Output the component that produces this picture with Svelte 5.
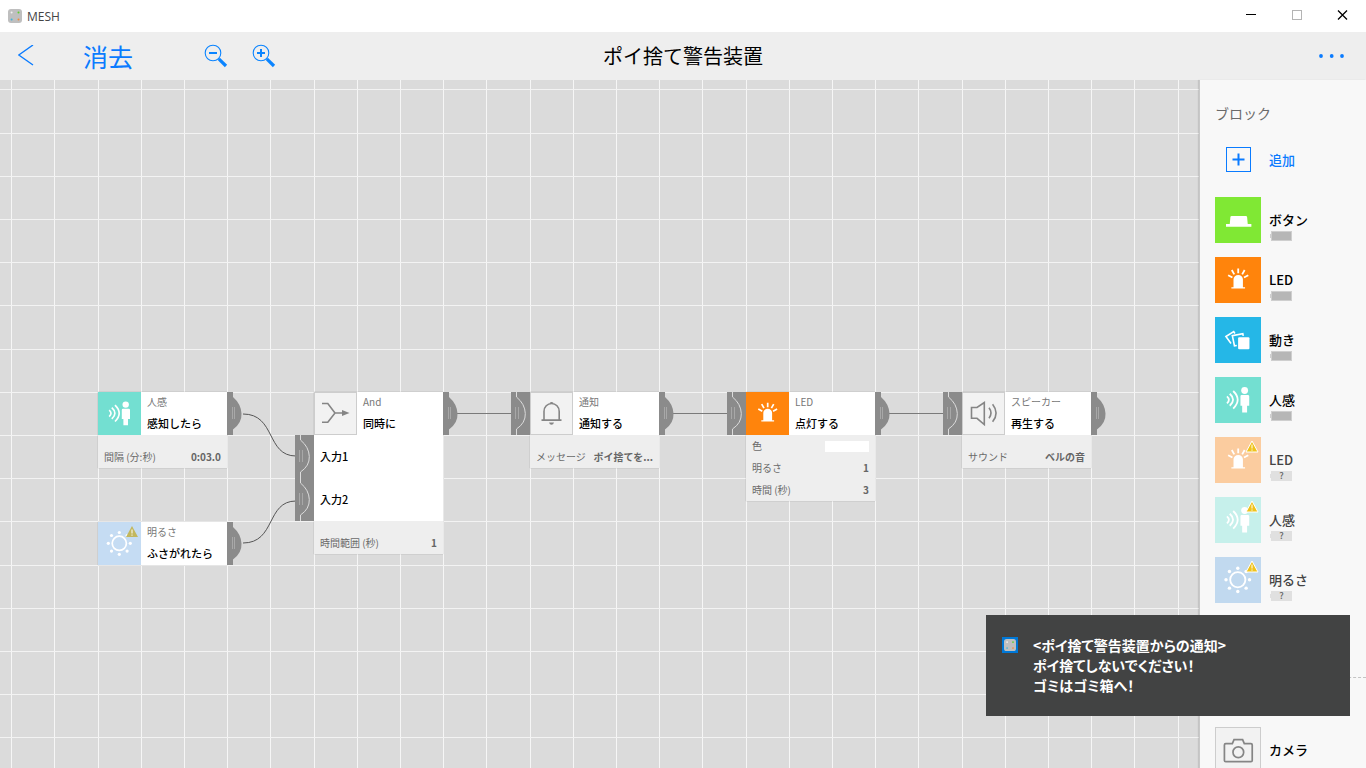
<script>
  const blocks = [
    { icon: 'button', name: 'ボタン', color: '#80e834' },
    { icon: 'led', name: 'LED', color: '#ff840c' },
    { icon: 'motion', name: '動き', color: '#25b7e7' },
    { icon: 'person', name: '人感', color: '#73dfd1' },
    { icon: 'led', name: 'LED', color: '#fbcc9f', lost: true },
    { icon: 'person', name: '人感', color: '#c6f0eb', lost: true },
    { icon: 'sun', name: '明るさ', color: '#c1d9ef', lost: true }
  ]

  const nodes = [
    {
      x: 98, y: 312, icon: 'person', color: '#73dfd1', name: '人感', action: '感知したら',
      params: [{ label: '間隔 (分:秒)', value: '0:03.0' }]
    },
    { x: 98, y: 442, icon: 'sun', color: '#c5dcf3', name: '明るさ', action: 'ふさがれたら', lost: true },
    {
      x: 314, y: 312, icon: 'merge', name: 'And', action: '同時に', inputs: ['入力1', '入力2'],
      params: [{ label: '時間範囲 (秒)', value: '1' }]
    },
    {
      x: 530, y: 312, icon: 'bell', name: '通知', action: '通知する', hasInput: true,
      params: [{ label: 'メッセージ', value: 'ポイ捨てを...' }]
    },
    {
      x: 746, y: 312, icon: 'led', color: '#ff840c', name: 'LED', action: '点灯する', hasInput: true,
      params: [
        { label: '色', swatch: '#ffffff' },
        { label: '明るさ', value: '1' },
        { label: '時間 (秒)', value: '3' }
      ]
    },
    {
      x: 962, y: 312, icon: 'speaker', name: 'スピーカー', action: '再生する', hasInput: true,
      params: [{ label: 'サウンド', value: 'ベルの音' }]
    }
  ]

  const curves = [
    'M243 334C276 334 266 376 296 376',
    'M243 463C276 463 266 421 296 421'
  ]
  const lines = [
    'M457 333.5H512',
    'M673 333.5H728',
    'M889 333.5H944'
  ]

  // grid pitch is 43.2, so five cells make one 216 tile
  const gridX = [0, 43, 87, 130, 173]
  const gridY = [0, 44, 87, 130, 173]
</script>

{#snippet icon(name)}
  <svg class="icon" viewBox="0 0 43 43" fill="none" aria-hidden="true">
    {#if name === 'button'}
      <path fill="#fff" d="M10.3 25.2h3.5l.6-6.4q.1-1.1 1.2-1.1h13.2q1.1 0 1.2 1.1l.6 6.4H34v2.6H10.3z" />
    {:else if name === 'led'}
      <path fill="#fff" d="M17.3 28.2v-7.4a4.4 4 0 0 1 8.8 0v7.4h2v1.2H15.3v-1.2z" />
      <path stroke="#fff" stroke-width="1.7" d="M21.7 10.7v4.6M15.7 12.2l2.3 4M27.7 12.2l-2.3 4M12.3 17l4 2.2M31.1 17l-4 2.2" />
    {:else if name === 'motion'}
      <rect fill="#fff" x="21.6" y="18.9" width="10.6" height="11.2" rx="1" />
      <path stroke="#fff" stroke-width="1.5" d="M26.4 17.6l-.4-2-9.8 1.8 2 9.6 2.2-.3M18.6 15.4l-1.1-1.7-7.3 4.6 4.8 6.5" />
    {:else if name === 'person'}
      <circle fill="#fff" cx="27.7" cy="12.6" r="3.2" />
      <path fill="#fff" d="M24.9 16.8h5.8q1.3 0 1.3 1.3v8.8h-2v6.4h-4.6v-6.4h-1.6v-8.8q0-1.3 1.1-1.3z" />
      <path stroke="#fff" stroke-width="1.7" d="M11.2 18.1q3.6 3.2 0 6.6M13.8 15.7q6.2 5.5 0 11.2M17 13.1q8.4 8.2 0 16.4" />
    {:else if name === 'sun'}
      <circle stroke="#fff" stroke-width="1.7" cx="21.3" cy="21.3" r="7.1" />
      <g fill="#fff">
        {#each [[21.3, 10.5], [21.3, 32.3], [10.3, 21.3], [32.3, 21.3], [13.5, 13.5], [29.1, 13.5], [13.5, 29.1], [29.1, 29.1]] as [cx, cy]}
          <circle {cx} {cy} r="1.6" />
        {/each}
      </g>
    {:else if name === 'merge'}
      <path stroke="#858585" stroke-width="1.6" d="M8 11.5h5.8L21 21l-7.2 9.3H8M21 21h8" />
      <path fill="#858585" d="M28 18l7.5 3-7.5 3z" />
    {:else if name === 'bell'}
      <path stroke="#858585" stroke-width="1.6" d="M11.5 28.1h20M14 28v-8.6a7.6 7.9 0 0 1 15.2 0V28" />
      <path fill="#858585" d="M19.6 11q1.9-1.8 4 0zM19 30.5h5q-.6 2.3-2.5 2.3T19 30.5z" />
    {:else if name === 'speaker'}
      <path stroke="#858585" stroke-width="1.6" d="M9.500 15.500h5.500l7.300-5v22l-7.300-6.200H9.500z" />
      <path stroke="#858585" stroke-width="1.6" d="M27 15.800q4 5.200 0 10.400M30.600 12.200q7 9 0 17.600" />
    {:else if name === 'camera'}
      <path stroke="#858585" stroke-width="1.6" d="M10 15.6h6.2l1.6-3.8h8l1.6 3.8h6.2q1.2 0 1.2 1.2v14.4q0 1.2-1.2 1.2H10q-1.2 0-1.2-1.2V16.8q0-1.2 1.2-1.2z" />
      <circle stroke="#858585" stroke-width="1.6" cx="21.8" cy="23.6" r="5" />
    {/if}
  </svg>
{/snippet}

{#snippet warning()}
  <svg class="warning" viewBox="0 0 14 13" aria-hidden="true">
    <path fill="#efc31c" stroke="#fff" stroke-width="1" stroke-linejoin="round" d="M7 1l6 11H1z" />
    <path stroke="#fff" stroke-width="1" d="M7 4.5v4M7 9.5v1.2" />
  </svg>
{/snippet}

{#snippet appIcon()}
  <svg class="app-icon" viewBox="0 0 14 14" aria-hidden="true">
    <rect width="14" height="14" rx="3" fill="#bfbfbf" />
    <circle cx="3.6" cy="3.6" r="1" fill="#f4f4f4" />
    <circle cx="10.5" cy="3.6" r="1" fill="#5ad12c" />
    <circle cx="3.6" cy="10.5" r="1" fill="#3fb4dd" />
    <circle cx="10.5" cy="10.5" r="1" fill="#f08a3c" />
  </svg>
{/snippet}

{#snippet inPort()}
  <svg class="port-in" viewBox="0 0 19 43" fill="none" aria-hidden="true">
    <rect width="19" height="43" fill="#8b8b8b" />
    <path stroke="#dcdcdc" stroke-width="1" d="M5.5 0v5Q14 12 14.3 21.5T5.5 37v6" />
    <path stroke="#a8a8a8" stroke-width="1" d="M4.5 15v12M7.5 15v12" />
  </svg>
{/snippet}

<div class="app">
  <header class="titlebar">
    {@render appIcon()}
    <span class="app-name">MESH</span>
    <div class="window-controls">
      <button aria-label="最小化">
        <svg viewBox="0 0 12 12"><path stroke="#000" d="M1 4.5h10" /></svg>
      </button>
      <button aria-label="最大化">
        <svg viewBox="0 0 12 12"><rect x="1.5" y="0.5" width="9" height="9" fill="none" stroke="#b4b4b4" /></svg>
      </button>
      <button aria-label="閉じる">
        <svg viewBox="0 0 12 12"><path stroke="#000" stroke-width="1.3" d="M1 .5l9 9M10 .5l-9 9" /></svg>
      </button>
    </div>
  </header>

  <div class="toolbar">
    <div class="tools">
      <button class="back" aria-label="戻る">
        <svg viewBox="0 0 16 22"><path fill="none" stroke="#0a7bff" stroke-width="1.4" d="M15 0L.8 10 15 20" /></svg>
      </button>
      <button class="clear">消去</button>
      <button class="zoom" aria-label="縮小">
        <svg viewBox="0 0 24 24" fill="none" stroke="#0a84ff">
          <circle cx="9" cy="9" r="7.8" stroke-width="1.1" />
          <path stroke-width="2" d="M5 9h8" />
          <path stroke-width="3.2" d="M14.8 14.8l7.2 7.2" />
        </svg>
      </button>
      <button class="zoom" aria-label="拡大">
        <svg viewBox="0 0 24 24" fill="none" stroke="#0a84ff">
          <circle cx="9" cy="9" r="7.8" stroke-width="1.1" />
          <path stroke-width="2" d="M5 9h8M9 5v8" />
          <path stroke-width="3.2" d="M14.8 14.8l7.2 7.2" />
        </svg>
      </button>
    </div>
    <h1>ポイ捨て警告装置</h1>
    <button class="more" aria-label="メニュー">
      <svg viewBox="0 0 26 6" fill="#0a7bff">
        <circle cx="3" cy="3" r="1.9" />
        <circle cx="13.7" cy="3" r="1.9" />
        <circle cx="24" cy="3" r="1.9" />
      </svg>
    </button>
  </div>

  <div class="workspace">
    <main class="canvas">
      <svg class="wires" fill="none" aria-hidden="true">
        <defs>
          <pattern id="grid" x="11" y="9" width="216" height="216" patternUnits="userSpaceOnUse">
            {#each gridX as x}
              <rect {x} y="0" width="1" height="216" fill="#f6f6f6" />
            {/each}
            {#each gridY as y}
              <rect x="0" {y} width="216" height="1" fill="#f3f3f3" />
            {/each}
          </pattern>
        </defs>
        <rect width="100%" height="100%" fill="url(#grid)" />
        {#each curves as d}
          <path {d} stroke="#555" />
        {/each}
        {#each lines as d}
          <path {d} stroke="#7a7a7a" />
        {/each}
      </svg>

      {#each nodes as node}
        <section class="node" style="left: {node.x}px; top: {node.y}px">
          <div class="head">
            {#if node.hasInput}{@render inPort()}{/if}
            <div class="tile" class:plain={!node.color} style:background={node.color}>
              {@render icon(node.icon)}
              {#if node.lost}{@render warning()}{/if}
            </div>
            <div class="caption">
              <span class="name">{node.name}</span>
              <span class="action">{node.action}</span>
            </div>
            <svg class="port-out" viewBox="0 0 15 43" fill="none" aria-hidden="true">
              <path fill="#8b8b8b" d="M0 0h6v5Q14 12 14.5 21.5T6 37.5V43H0z" />
              <path stroke="#a8a8a8" d="M5.5 15v12M7.5 15v12" />
            </svg>
          </div>
          {#if node.inputs}
            {#each node.inputs as input}
              <div class="input-row">
                {@render inPort()}
                {input}
              </div>
            {/each}
          {/if}
          {#if node.params}
            <dl class="params" class:single={node.params.length === 1}>
              {#each node.params as param}
                <div class="param">
                  <dt>{param.label}</dt>
                  {#if param.swatch}
                    <dd class="swatch" style="background: {param.swatch}"></dd>
                  {:else}
                    <dd>{param.value}</dd>
                  {/if}
                </div>
              {/each}
            </dl>
          {/if}
        </section>
      {/each}
    </main>

    <aside class="sidebar">
      <h2>ブロック</h2>
      <button class="add">
        <svg viewBox="0 0 25 25" fill="none" stroke="#0a7bff" aria-hidden="true">
          <rect x=".5" y=".5" width="24" height="24" />
          <path stroke-width="2" d="M6.5 12.5h12M12.5 6.5v12" />
        </svg>
        追加
      </button>
      <div class="blocks">
        {#each blocks as block}
          <button class="block" class:lost={block.lost}>
            <span class="tile" style="background: {block.color}">
              {@render icon(block.icon)}
              {#if block.lost}{@render warning()}{/if}
            </span>
            <span class="info">
              <span>{block.name}</span>
              <span class="battery">{block.lost ? '?' : ''}</span>
            </span>
          </button>
        {/each}
      </div>
      <div class="blocks apps">
        <button class="block">
          <span class="tile plain">{@render icon('camera')}</span>
          <span class="info"><span>カメラ</span></span>
        </button>
      </div>
    </aside>
  </div>

  <div class="toast" role="status">
    <span class="toast-icon">{@render appIcon()}</span>
    <p>
      &lt;ポイ捨て警告装置からの通知&gt;<br />
      ポイ捨てしないでください！<br />
      ゴミはゴミ箱へ！
    </p>
  </div>
</div>

<style>
  :global(body) {
    margin: 0;
    overflow: hidden;
  }

  .app {
    display: flex;
    flex-direction: column;
    height: 100vh;
    font-family: 'Noto Sans CJK JP', sans-serif;
    color: #000;
    background: #fff;
  }

  button {
    display: flex;
    align-items: center;
    padding: 0;
    border: 0;
    background: none;
    font: inherit;
    color: inherit;
    cursor: pointer;
  }

  svg {
    display: block;
    flex-shrink: 0;
  }

  h1, h2, p, dl, dd {
    margin: 0;
  }

  /* title bar */
  .titlebar {
    display: flex;
    align-items: center;
    height: 32px;
    padding-left: 8px;
  }

  .app-icon {
    width: 14px;
    height: 14px;
  }

  .app-name {
    margin-left: 5px;
    font-family: 'Open Sans', sans-serif;
    font-size: 12px;
    color: #444;
  }

  .window-controls {
    display: flex;
    margin-left: auto;
  }

  .window-controls button {
    justify-content: center;
    width: 46px;
    height: 32px;
  }

  .window-controls svg {
    width: 12px;
    height: 12px;
  }

  /* toolbar */
  .toolbar {
    display: grid;
    grid-template-columns: 1fr auto 1fr;
    align-items: center;
    height: 48px;
    background: #eee;
  }

  .tools {
    display: flex;
    align-items: center;
    padding-left: 18px;
  }

  .back svg {
    width: 16px;
    height: 22px;
  }

  .clear {
    margin: 0 71px 0 49px;
    font-size: 25px;
    line-height: 32px;
    color: #0a7bff;
  }

  .zoom {
    margin-right: 24px;
  }

  .zoom svg {
    width: 24px;
    height: 24px;
  }

  h1 {
    font-size: 20px;
    font-weight: 400;
    line-height: 32px;
  }

  .more {
    justify-self: end;
    margin-right: 22px;
  }

  .more svg {
    width: 26px;
    height: 6px;
  }

  .workspace {
    display: flex;
    flex: 1;
    min-height: 0;
  }

  /* recipe canvas */
  .canvas {
    position: relative;
    flex: 1;
    overflow: hidden;
    background: #dbdbdb;
  }

  .wires {
    width: 100%;
    height: 100%;
  }

  .node {
    position: absolute;
    width: 129px;
    box-shadow: 0 0 1px rgba(0, 0, 0, 0.3);
    background: #fff;
  }

  .head {
    position: relative;
    display: flex;
    height: 43px;
  }

  .tile {
    position: relative;
    box-sizing: border-box;
    flex-shrink: 0;
    width: 43px;
    height: 43px;
  }

  .tile.plain {
    background: #f2f2f2;
    box-shadow: inset 0 0 0 1px #cdcdcd;
  }

  .icon {
    width: 100%;
    height: 100%;
  }

  .warning {
    position: absolute;
    top: 3px;
    right: 2px;
    width: 14px;
    height: 13px;
  }

  .node .warning path:first-child {
    fill: #c2b75e;
    stroke: none;
  }

  .caption {
    display: flex;
    flex-direction: column;
    padding-left: 6px;
  }

  .name {
    font-size: 10px;
    line-height: 20px;
    color: #777;
  }

  .action {
    font-size: 11px;
    font-weight: 500;
    line-height: 22px;
  }

  .port-in {
    position: absolute;
    top: 0;
    left: -19px;
    width: 19px;
    height: 43px;
  }

  .port-out {
    position: absolute;
    top: 0;
    left: 100%;
    width: 15px;
    height: 43px;
  }

  .input-row {
    position: relative;
    height: 43px;
    padding-left: 6px;
    font-size: 11px;
    font-weight: 500;
    line-height: 42px;
  }

  .params {
    background: #eee;
    font-size: 10px;
    line-height: 22px;
    color: #6a6a6a;
  }

  .params.single {
    padding-top: 11px;
  }

  .param {
    display: flex;
    align-items: center;
    justify-content: space-between;
    height: 22px;
    padding: 0 6px;
  }

  dd {
    font-weight: 700;
    color: #666;
  }

  .swatch {
    width: 44px;
    height: 11px;
  }

  /* block list */
  .sidebar {
    position: relative;
    width: 151px;
    padding: 23px 0 0 15px;
    overflow: hidden;
    background: #f8f8f8;
    border-left: 1px solid #c8c8c8;
    box-shadow: -1px 0 1px rgba(0, 0, 0, 0.1);
  }

  h2 {
    font-size: 14px;
    font-weight: 400;
    line-height: 20px;
    color: #6a6a6a;
  }

  .add {
    gap: 18px;
    height: 46px;
    margin: 13px 0 15px;
    padding-left: 11px;
    font-size: 13px;
    font-weight: 500;
    color: #0a7bff;
  }

  .add svg {
    width: 25px;
    height: 25px;
  }

  .blocks {
    display: flex;
    flex-direction: column;
    gap: 14px;
  }

  .block {
    gap: 8px;
    text-align: left;
  }

  .block .tile {
    width: 46px;
    height: 46px;
  }

  .info {
    display: flex;
    flex-direction: column;
    height: 32px;
    font-size: 13px;
    font-weight: 500;
    line-height: 18px;
    padding-top: 14px;
  }

  .lost .info {
    color: #444;
  }

  .battery {
    position: relative;
    box-sizing: border-box;
    width: 21px;
    height: 10px;
    margin: 2px 0 0 2px;
    border: 1px solid #cfcfcf;
    background: #b6b6b6;
  }

  .battery::before {
    content: '';
    position: absolute;
    top: 2px;
    left: -2px;
    width: 2px;
    height: 4px;
    background: #cfcfcf;
  }

  .lost .battery {
    border-color: #e0e0e0;
    background: #e0e0e0;
    font-size: 9px;
    line-height: 8px;
    text-align: center;
    color: #666;
  }

  .lost .battery::before {
    background: #e0e0e0;
  }

  .apps {
    margin: 74px 0 0 -15px;
    padding: 49px 0 0 15px;
    border-top: 1px dashed #c4c4c4;
  }

  /* notification */
  .toast {
    position: fixed;
    right: 16px;
    bottom: 52px;
    display: flex;
    gap: 15px;
    box-sizing: border-box;
    width: 364px;
    padding: 20px 16px 21px;
    background: #424343;
    color: #fff;
  }

  .toast-icon {
    display: flex;
    align-items: center;
    justify-content: center;
    width: 16px;
    height: 16px;
    margin-top: 2px;
    background: #0078d7;
  }

  .toast-icon .app-icon {
    width: 12px;
    height: 12px;
  }

  .toast p {
    font-size: 14px;
    font-weight: 700;
    line-height: 20px;
    font-feature-settings: 'palt';
  }
</style>
